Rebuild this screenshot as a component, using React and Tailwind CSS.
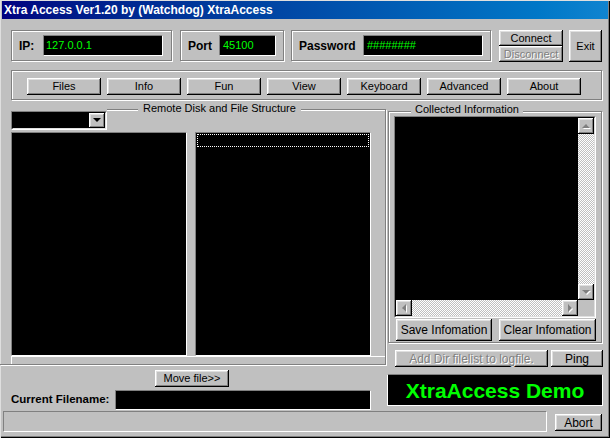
import React from 'react';

const btn =
  'flex items-center justify-center bg-[#c0c0c0] shadow-[inset_-1px_-1px_0_#000,inset_1px_1px_0_#fff,inset_-2px_-2px_0_#808080,inset_2px_2px_0_#dfdfdf]';
const etched = 'border border-[#808080] shadow-[1px_1px_0_#fff,inset_1px_1px_0_#fff]';
const sunken = 'bg-black border border-t-[#808080] border-l-[#808080] border-b-white border-r-white';
const disabledText = 'text-[#808080] [text-shadow:1px_1px_0_#fff]';
const checker = 'bg-[repeating-conic-gradient(#c0c0c0_0%_25%,#fff_0%_50%)] bg-[length:2px_2px]';

function Arrow({ dir, color = '#808080', shadow = true }) {
  const pts = {
    up: '0,4 4,0 8,4',
    down: '0,0 8,0 4,4',
    left: '4,0 4,8 0,4',
    right: '0,0 0,8 4,4',
  }[dir];
  const vertical = dir === 'up' || dir === 'down';
  return (
    <svg width={vertical ? 9 : 5} height={vertical ? 5 : 9} viewBox={vertical ? '0 0 9 5' : '0 0 5 9'}>
      {shadow && <polygon points={pts} fill="#fff" transform="translate(1,1)" />}
      <polygon points={pts} fill={color} />
    </svg>
  );
}

function ScrollBtn({ dir }) {
  return (
    <div className={`${btn} w-[16px] h-[16px] shrink-0`}>
      <Arrow dir={dir} />
    </div>
  );
}

export default function App() {
  const menu = ['Files', 'Info', 'Fun', 'View', 'Keyboard', 'Advanced', 'About'];

  return (
    <div className="w-[610px] h-[438px] overflow-hidden bg-[#c0c0c0] text-[11px] leading-none text-black flex flex-col font-['Liberation_Sans',Arial,sans-serif] shadow-[inset_1px_1px_0_#dfdfdf,inset_-1px_-1px_0_#000,inset_-2px_-2px_0_#808080]">
      {/* Title bar */}
      <div className="mx-[2px] mt-[1px] h-[18px] bg-linear-to-r from-[#000080] to-[#1084d0] flex items-center pl-[2px] text-white font-bold text-[12px]">
        Xtra Access Ver1.20 by (Watchdog) XtraAccess
      </div>

      {/* Connection row */}
      <div className="mt-[11px] ml-[11px] flex items-start h-[32px]">
        <div className={`${etched} w-[161px] h-[31px] flex items-center pl-[7px]`}>
          <span className="w-[24px] font-bold text-[12px]">IP:</span>
          <div className={`${sunken} w-[120px] h-[21px] flex items-center pl-[2px] text-[#00ff00]`}>127.0.0.1</div>
        </div>
        <div className={`${etched} ml-[8px] w-[104px] h-[31px] flex items-center pl-[7px]`}>
          <span className="w-[31px] font-bold text-[12px]">Port</span>
          <div className={`${sunken} w-[57px] h-[21px] flex items-center pl-[3px] text-[#00ff00]`}>45100</div>
        </div>
        <div className={`${etched} ml-[7px] w-[200px] h-[31px] flex items-center pl-[7px]`}>
          <span className="w-[64px] font-bold text-[12px]">Password</span>
          <div className={`${sunken} w-[120px] h-[21px] flex items-center pl-[3px] text-[#00ff00]`}>########</div>
        </div>
        <div className="ml-[8px] w-[64px] flex flex-col">
          <div className={`${btn} h-[16px]`}>Connect</div>
          <div className={`${btn} h-[16px] ${disabledText}`}>Disconnect</div>
        </div>
        <div className={`${btn} ml-[6px] w-[33px] h-[32px]`}>Exit</div>
      </div>

      {/* Menu buttons */}
      <div className={`${etched} mt-[8px] ml-[11px] w-[591px] h-[30px] flex items-start pl-[15px] pt-[7px] gap-[6px]`}>
        {menu.map((m) => (
          <div key={m} className={`${btn} w-[74px] h-[17px]`}>
            {m}
          </div>
        ))}
      </div>

      {/* Main section */}
      <div className="flex items-start h-[311px]">
        {/* Left column */}
        <div className="w-[387px] pt-[9px] flex flex-col">
          <div className="w-[386px] border-r border-b border-[#808080] shadow-[1px_1px_0_#fff] flex flex-col">
            <div className="flex h-[21px]">
              <div className="ml-[11px] mt-[2px] w-[96px] h-[19px] border border-t-[#808080] border-l-[#808080] border-b-white border-r-white">
                <div className="h-full bg-black border border-t-black border-l-black border-b-[#dfdfdf] border-r-[#dfdfdf] flex justify-end">
                  <div className={`${btn} w-[16px] h-full`}>
                    <Arrow dir="down" color="#000" shadow={false} />
                  </div>
                </div>
              </div>
              <div className="relative flex-1">
                <div className="h-[2px] border-t border-t-[#808080] border-b border-b-white" />
                <span className="absolute -top-[6px] left-[31px] px-[5px] bg-[#c0c0c0]">Remote Disk and File Structure</span>
              </div>
            </div>
            <div className="mt-[2px] flex">
              <div className={`${sunken} ml-[11px] w-[176px] h-[224px]`} />
              <div className={`${sunken} ml-[8px] w-[176px] h-[224px] pt-[1px] px-[1px]`}>
                <div className="h-[13px] border border-dotted border-white" />
              </div>
            </div>
            <div className="ml-[11px] w-[374px] h-[8px] border-t border-l border-white" />
          </div>

          <div className={`${btn} mt-[5px] ml-[155px] w-[74px] h-[17px]`}>Move file&gt;&gt;</div>

          <div className="mt-[3px] flex items-center h-[20px]">
            <span className="ml-[11px] w-[104px] font-bold text-[11.5px]">Current Filename:</span>
            <div className={`${sunken} w-[256px] h-[20px]`} />
          </div>
        </div>

        {/* Right column */}
        <div className="w-[223px] flex flex-col">
          <div className={`${etched} relative mt-[11px] ml-[1px] w-[214px] pt-[4px] pl-[5px] pb-[1px]`}>
            <span className="absolute -top-[8px] left-[22px] px-[4px] bg-[#c0c0c0]">Collected Information</span>
            <div className="w-[202px] h-[202px] border border-t-[#808080] border-l-[#808080] border-b-white border-r-white">
              <div className="h-full border border-t-black border-l-black border-b-[#dfdfdf] border-r-[#dfdfdf] flex flex-col">
                <div className="flex flex-1">
                  <div className="flex-1 bg-black" />
                  <div className={`w-[16px] flex flex-col ${checker}`}>
                    <ScrollBtn dir="up" />
                    <div className="flex-1" />
                    <ScrollBtn dir="down" />
                  </div>
                </div>
                <div className="flex h-[16px]">
                  <div className={`flex-1 flex ${checker}`}>
                    <ScrollBtn dir="left" />
                    <div className="flex-1" />
                    <ScrollBtn dir="right" />
                  </div>
                  <div className="w-[16px] bg-[#c0c0c0]" />
                </div>
              </div>
            </div>
            <div className="mt-[1px] ml-[2px] flex gap-[7px]">
              <div className={`${btn} w-[96px] h-[22px] text-[12px]`}>Save Infomation</div>
              <div className={`${btn} w-[97px] h-[22px] text-[12px]`}>Clear Infomation</div>
            </div>
          </div>

          <div className="mt-[7px] flex">
            <div className={`${btn} ml-[8px] w-[153px] h-[17px] text-[12px] ${disabledText}`}>Add Dir filelist to logfile.</div>
            <div className={`${btn} ml-[3px] w-[52px] h-[17px] text-[12px]`}>Ping</div>
          </div>

          <div className="mt-[7px] w-[216px] h-[32px] bg-black border border-t-[#808080] border-l-white border-b-white border-r-white flex items-center justify-center">
            <span className="text-[#00ff00] font-bold text-[21px] font-['Comic_Sans_MS','Liberation_Sans',sans-serif]">XtraAccess Demo</span>
          </div>
        </div>
      </div>

      {/* Status bar */}
      <div className="flex items-start h-[21px] pl-[3px]">
        <div className="w-[544px] h-[21px] border border-t-[#808080] border-l-[#808080] border-b-white border-r-white" />
        <div className={`${btn} ml-[8px] mt-[3px] w-[47px] h-[17px] text-[12px]`}>Abort</div>
      </div>
    </div>
  );
}
